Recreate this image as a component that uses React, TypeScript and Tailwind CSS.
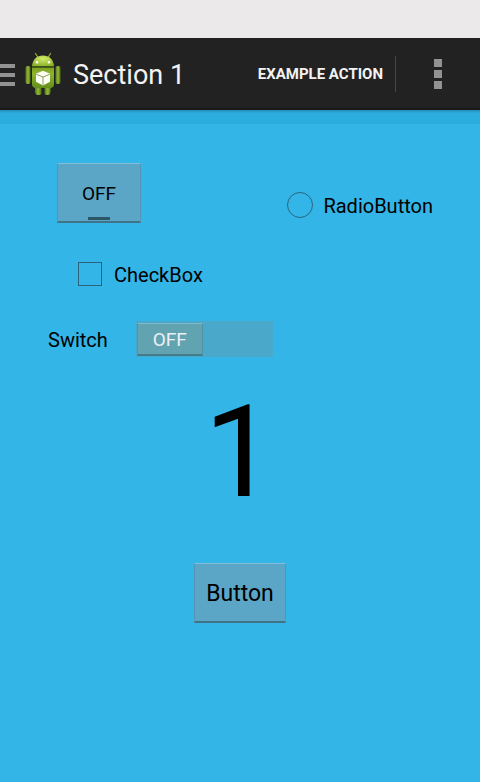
import { useState } from "react";

function AndroidIcon() {
  return (
    <svg className="h-11 w-9 shrink-0" viewBox="0 0 36 44" aria-hidden="true">
      <defs>
        <linearGradient id="body" x1="0" y1="0" x2="0" y2="1">
          <stop offset="0" stopColor="#7ea022" />
          <stop offset="0.3" stopColor="#8db42a" />
          <stop offset="1" stopColor="#648f1b" />
        </linearGradient>
        <radialGradient id="head" cx="0.5" cy="0.3" r="0.7">
          <stop offset="0" stopColor="#d2ea6a" />
          <stop offset="1" stopColor="#8cb428" />
        </radialGradient>
        <linearGradient id="limb" x1="0" y1="0" x2="1" y2="0">
          <stop offset="0" stopColor="#54791a" />
          <stop offset="0.5" stopColor="#93b833" />
          <stop offset="1" stopColor="#4c6e17" />
        </linearGradient>
      </defs>
      <path d="M10.500 1.500l2.500 4M25.500 1.500l-2.500 4" stroke="#8eaf2c" strokeWidth="1.200" strokeLinecap="round" />
      <path d="M10 32h6.500v9q0 2-2 2h-2q-2 0-2.500-3z" fill="url(#limb)" />
      <path d="M19.500 32H26l-.5 8q-.5 3-2.500 3h-1.500q-2 0-2-2z" fill="url(#limb)" />
      <rect x="0.500" y="14" width="5" height="18" rx="2" fill="url(#limb)" />
      <rect x="30.500" y="14" width="5" height="18" rx="2" fill="url(#limb)" />
      <path d="M7 15.500h22V32q0 4-4 4H11q-4 0-4-4z" fill="url(#body)" />
      <path d="M7 14.200C7.500 7.500 12 3.500 18 3.500S28.500 7.500 29 14.200z" fill="url(#head)" />
      <path d="M7 15h22" stroke="#415d15" strokeWidth="1.200" />
      <circle cx="12" cy="10.200" r="1.200" fill="#fff" />
      <circle cx="24" cy="10.200" r="1.200" fill="#fff" />
      <path d="M18 18.800l7 3v8L18 33.500l-7-3.700v-8z" fill="#fdfdf5" />
      <path d="M11.300 22.300L18 25l6.700-2.700M18 25v8" fill="none" stroke="#87a05a" strokeWidth="1" />
    </svg>
  );
}

const holoButton =
  "flex h-[60px] flex-col items-center justify-center rounded-[1px] border border-x-[#5395b2] border-t-[#7fbfdb] border-b-2 border-b-[#3f7488] bg-[#5ba6c7] pt-1";

export default function App() {
  const [toggled, setToggled] = useState(false);
  const [switched, setSwitched] = useState(false);

  return (
    <div className="flex min-h-screen flex-col bg-[#33b5e7] font-[Roboto,sans-serif] text-black">
      <div className="h-[38px] bg-[#ebe9ea]" />
      <header className="flex h-[72px] items-center bg-[#222222] text-[#f3f3f3] shadow-[inset_0_-2px_0_#191919]">
        <button aria-label="Open navigation" className="flex w-[15px] flex-col gap-[5px] pt-0.5">
          <span className="h-1 w-full bg-[#929292]" />
          <span className="h-1 w-full bg-[#929292]" />
          <span className="h-1 w-full bg-[#929292]" />
        </button>
        <div className="ml-[10px] flex items-center gap-3">
          <AndroidIcon />
          <h1 className="pt-0.5 text-[27px] leading-8">Section 1</h1>
        </div>
        <button className="ml-auto pr-3 text-[15px] font-bold">EXAMPLE ACTION</button>
        <div className="h-9 w-px bg-[#474747]" />
        <button aria-label="More options" className="flex w-[84px] flex-col items-center gap-[3px]">
          <span className="size-2 bg-[#929292]" />
          <span className="size-2 bg-[#929292]" />
          <span className="size-2 bg-[#929292]" />
        </button>
      </header>
      <div className="h-[14px] bg-linear-to-b from-[#2690ba] via-[#2badde] via-25% to-[#2badde]" />

      <main className="flex flex-col pt-[39px]">
        <div className="flex items-end justify-between pr-[47px] pl-[57px]">
          <button
            aria-pressed={toggled}
            onClick={() => setToggled(!toggled)}
            className={`${holoButton} relative w-[84px] text-[19px]`}
          >
            {toggled ? "ON" : "OFF"}
            <span className={`absolute bottom-[1px] h-[3px] w-[22px] ${toggled ? "bg-[#0099cc]" : "bg-[#2c5565]"}`} />
          </button>
          <label className="flex items-center gap-[10px] pb-[3px] text-[20px] leading-7">
            <input
              type="radio"
              className="size-[26px] appearance-none rounded-full border border-[#2b657c] checked:bg-[#0099cc]"
            />
            <span className="pt-0.5">RadioButton</span>
          </label>
        </div>

        <label className="mt-[36px] ml-[78px] flex items-center gap-3 self-start text-[20px] leading-7">
          <input
            type="checkbox"
            className="size-6 appearance-none border border-[#2b657c] checked:bg-[#0099cc]"
          />
          <span className="pt-0.5">CheckBox</span>
        </label>

        <div className="mt-8 ml-12 flex items-center gap-7 self-start text-[20px]">
          <span id="switch-label" className="pt-0.5">Switch</span>
          <button
            role="switch"
            aria-checked={switched}
            aria-labelledby="switch-label"
            onClick={() => setSwitched(!switched)}
            className={`flex h-9 w-[137px] items-center bg-[#4aa8ca] px-px ${switched ? "justify-end" : ""}`}
          >
            <span className="flex h-[33px] w-[66px] items-center justify-center rounded-[1px] border border-x-[#5093a5] border-t-[#7dbaca] border-b-2 border-b-[#437c8c] bg-[#62a3b2] pt-1 text-[19px] text-[#eceff2]">
              {switched ? "ON" : "OFF"}
            </span>
          </button>
        </div>

        <p className="mt-[31px] text-center text-[128px] leading-[128px]">1</p>

        <button className={`${holoButton} mt-[47px] w-[92px] self-center text-[23px]`}>Button</button>
      </main>
    </div>
  );
}
